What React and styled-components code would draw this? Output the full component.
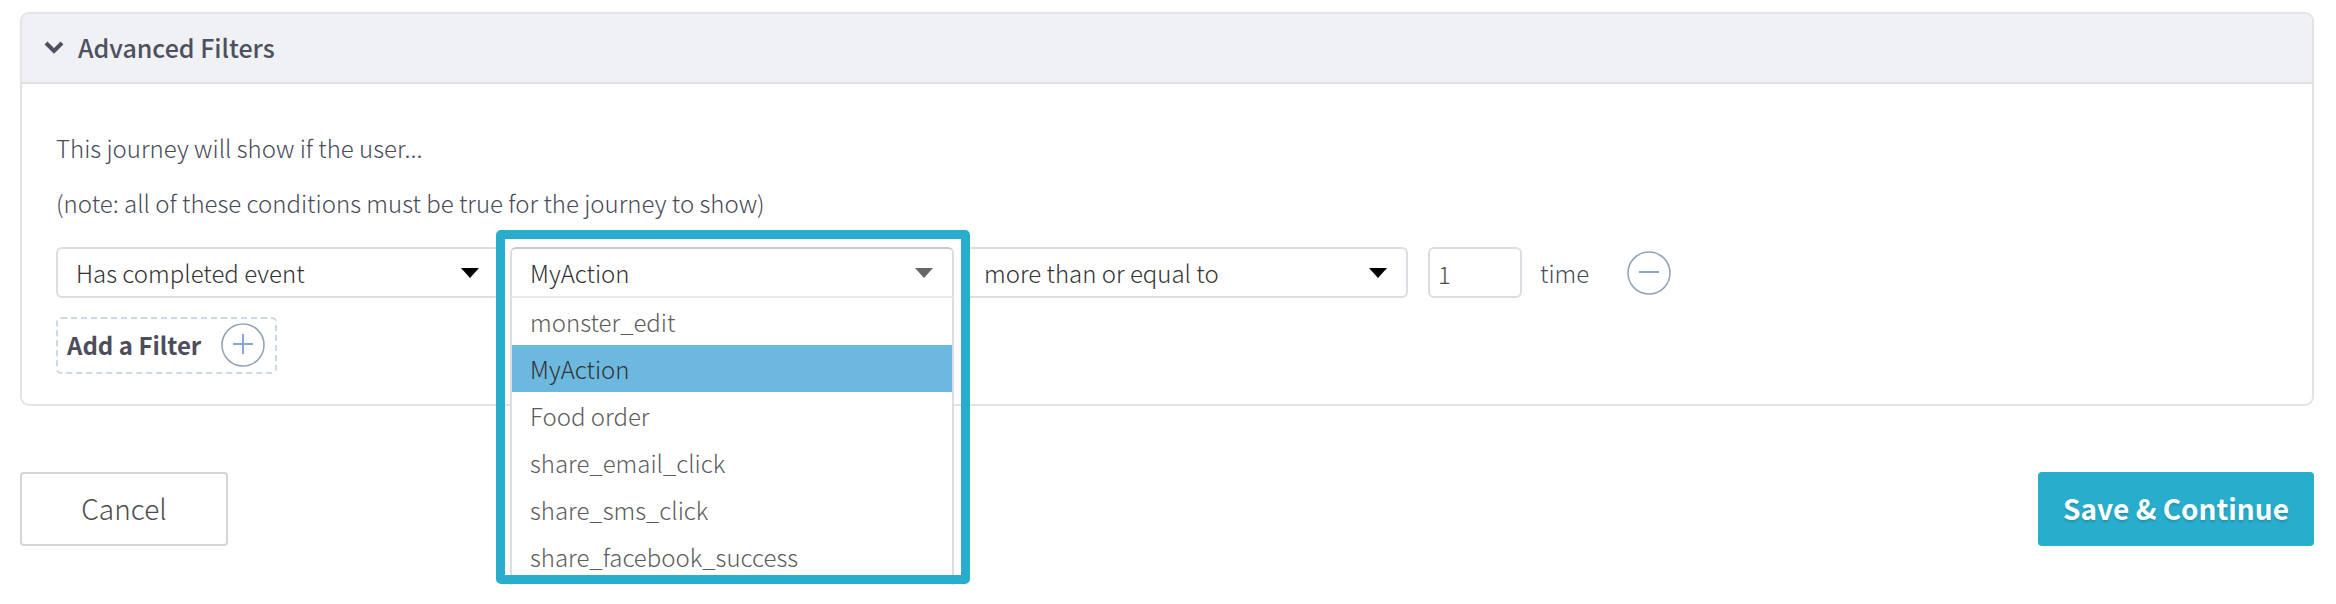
import React, { useState } from "react";
import styled, { createGlobalStyle } from "styled-components";

const GlobalStyle = createGlobalStyle`
  *, *::before, *::after { box-sizing: border-box; }
  body {
    margin: 0;
    background: #fff;
    color: #484b5a;
    font-family: "Noto Sans CJK SC", "Noto Sans", sans-serif;
    font-size: 24px;
    font-weight: 300;
    line-height: 36px;
  }
  button, input, select { font: inherit; color: inherit; margin: 0; }
`;

const Page = styled.main`
  padding: 12px 22px 56px 20px;
`;

const Panel = styled.section`
  border: 2px solid #e2e3e4;
  border-radius: 9px;
`;

const PanelHeader = styled.h2`
  margin: 0;
  border-bottom: 2px solid #e0e1e3;
  border-radius: 7px 7px 0 0;
  background: #f0f1f5;
  font-size: 25px;
`;

const PanelToggle = styled.button`
  display: flex;
  align-items: center;
  gap: 14px;
  width: 100%;
  height: 68px;
  padding: 0 22px 2px;
  border: 0;
  background: none;
  color: #4d505e;
  font-weight: 500;
  cursor: pointer;
`;

const PanelBody = styled.div`
  padding: 46px 34px 30px;
`;

const Intro = styled.div`
  display: flex;
  flex-direction: column;
  gap: 19px;
  margin-bottom: 26px;
`;

const Note = styled.p`
  margin: 0;
`;

const FilterRow = styled.div`
  display: flex;
  align-items: center;
  gap: 10px;
  margin-bottom: 19px;
`;

const Field = styled.div`
  position: relative;
  z-index: ${(p) => (p.$open ? 1 : 0)};
  flex: 0 1 444px;
  display: grid;
  align-items: center;
  color: ${(p) => (p.$open ? "#666" : "#000")};

  > select, > svg { grid-area: 1 / 1; }
  > svg { justify-self: end; margin-right: 20px; pointer-events: none; }
`;

const Select = styled.select`
  appearance: none;
  width: 100%;
  height: 51px;
  padding: 0 50px 0 18px;
  border: 2px solid #dcdde3;
  border-color: ${(p) => (p.$open ? "#c8cad0 #dcdde3 #e9e9ec" : "#dcdde3")};
  border-radius: ${(p) => (p.$open ? "6px 6px 0 0" : "6px")};
  background: #fff;
  color: #333;
  outline: none;
`;

const Menu = styled.ul`
  position: absolute;
  top: 100%;
  left: 0;
  right: 0;
  height: 287px;
  margin: 0;
  padding: 0;
  overflow: hidden;
  border: solid #dcdde3;
  border-width: 0 2px;
  background: #fff;
  list-style: none;
`;

const Option = styled.li`
  height: 47px;
  padding: 0 18px;
  line-height: 47px;
  color: ${(p) => (p.$selected ? "#333" : "#5c5c5c")};
  background: ${(p) => (p.$selected ? "#6cb8df" : "transparent")};
  cursor: pointer;
`;

const Highlight = styled.div`
  position: absolute;
  inset: -17px -16px -286px -14px;
  border: 9px solid #29adcc;
  border-radius: 5px;
  pointer-events: none;
`;

const CountLabel = styled.label`
  display: flex;
  align-items: center;
  gap: 18px;
  margin-left: 10px;
`;

const CountInput = styled.input`
  width: 94px;
  height: 51px;
  padding: 2px 8px 0;
  border: 2px solid #dcdde3;
  border-radius: 6px;
  background: #fff;
  color: #4c4c4c;
  outline: none;
`;

const RemoveButton = styled.button`
  display: flex;
  margin-left: 28px;
  padding: 0;
  border: 0;
  background: none;
  cursor: pointer;
`;

const AddButton = styled.button`
  display: flex;
  align-items: center;
  gap: 20px;
  height: 57px;
  padding: 0 10px 2px 9px;
  border: 2px dashed #c9d9ea;
  border-radius: 5px;
  background: none;
  color: #4d4d5c;
  font-weight: 700;
  cursor: pointer;
`;

const Actions = styled.footer`
  display: flex;
  justify-content: space-between;
  margin-top: 66px;
`;

const ActionButton = styled.button`
  min-width: ${(p) => (p.$primary ? "276px" : "208px")};
  height: 74px;
  padding: 0 20px 2px;
  border: 2px solid ${(p) => (p.$primary ? "#29adcc" : "#d5d5d6")};
  border-radius: 4px;
  background: ${(p) => (p.$primary ? "#29adcc" : "#fff")};
  color: ${(p) => (p.$primary ? "#fff" : "#4c4c4c")};
  font-size: 28px;
  font-weight: ${(p) => (p.$primary ? 700 : 300)};
  text-shadow: ${(p) => (p.$primary ? "0 2px 2px rgba(0, 70, 95, 0.25)" : "none")};
  cursor: pointer;
`;

const Chevron = () => (
  <svg width="20" height="14" viewBox="0 0 20 14" aria-hidden="true">
    <path d="M2 3l8 8 8-8" fill="none" stroke="currentColor" strokeWidth="4" />
  </svg>
);

const Caret = () => (
  <svg width="20" height="10" viewBox="0 0 20 10" aria-hidden="true">
    <path d="M1 0h18l-9 10z" fill="currentColor" />
  </svg>
);

const CircleIcon = ({ plus }) => (
  <svg width="44" height="44" viewBox="0 0 44 44" fill="none" aria-hidden="true">
    <circle cx="22" cy="22" r="21" stroke="#94a5b8" strokeWidth="1.6" />
    <path d={plus ? "M12 21h20M22 11v20" : "M12 21h20"} stroke="#85a8d0" strokeWidth="2" />
  </svg>
);

const EVENTS = [
  "monster_edit",
  "MyAction",
  "Food order",
  "share_email_click",
  "share_sms_click",
  "share_facebook_success",
];

export default function App() {
  const [event, setEvent] = useState("MyAction");

  return (
    <>
      <GlobalStyle />
      <Page>
        <Panel>
          <PanelHeader>
            <PanelToggle type="button" aria-expanded="true">
              <Chevron />
              Advanced Filters
            </PanelToggle>
          </PanelHeader>
          <PanelBody>
            <Intro>
              <Note>This journey will show if the user...</Note>
              <Note>(note: all of these conditions must be true for the journey to show)</Note>
            </Intro>
            <FilterRow>
              <Field>
                <Select aria-label="Condition">
                  <option>Has completed event</option>
                </Select>
                <Caret />
              </Field>
              <Field $open>
                <Select
                  $open
                  aria-label="Event"
                  value={event}
                  onChange={(e) => setEvent(e.target.value)}
                >
                  {EVENTS.map((name) => (
                    <option key={name}>{name}</option>
                  ))}
                </Select>
                <Caret />
                <Menu role="listbox" aria-label="Events">
                  {EVENTS.map((name) => (
                    <Option
                      key={name}
                      role="option"
                      aria-selected={name === event}
                      $selected={name === event}
                      onClick={() => setEvent(name)}
                    >
                      {name}
                    </Option>
                  ))}
                </Menu>
                <Highlight />
              </Field>
              <Field>
                <Select aria-label="Comparison">
                  <option>more than or equal to</option>
                </Select>
                <Caret />
              </Field>
              <CountLabel>
                <CountInput type="text" inputMode="numeric" defaultValue="1" />
                time
              </CountLabel>
              <RemoveButton type="button" aria-label="Remove filter">
                <CircleIcon />
              </RemoveButton>
            </FilterRow>
            <AddButton type="button">
              Add a Filter
              <CircleIcon plus />
            </AddButton>
          </PanelBody>
        </Panel>
        <Actions>
          <ActionButton type="button">Cancel</ActionButton>
          <ActionButton type="submit" $primary>
            Save &amp; Continue
          </ActionButton>
        </Actions>
      </Page>
    </>
  );
}
